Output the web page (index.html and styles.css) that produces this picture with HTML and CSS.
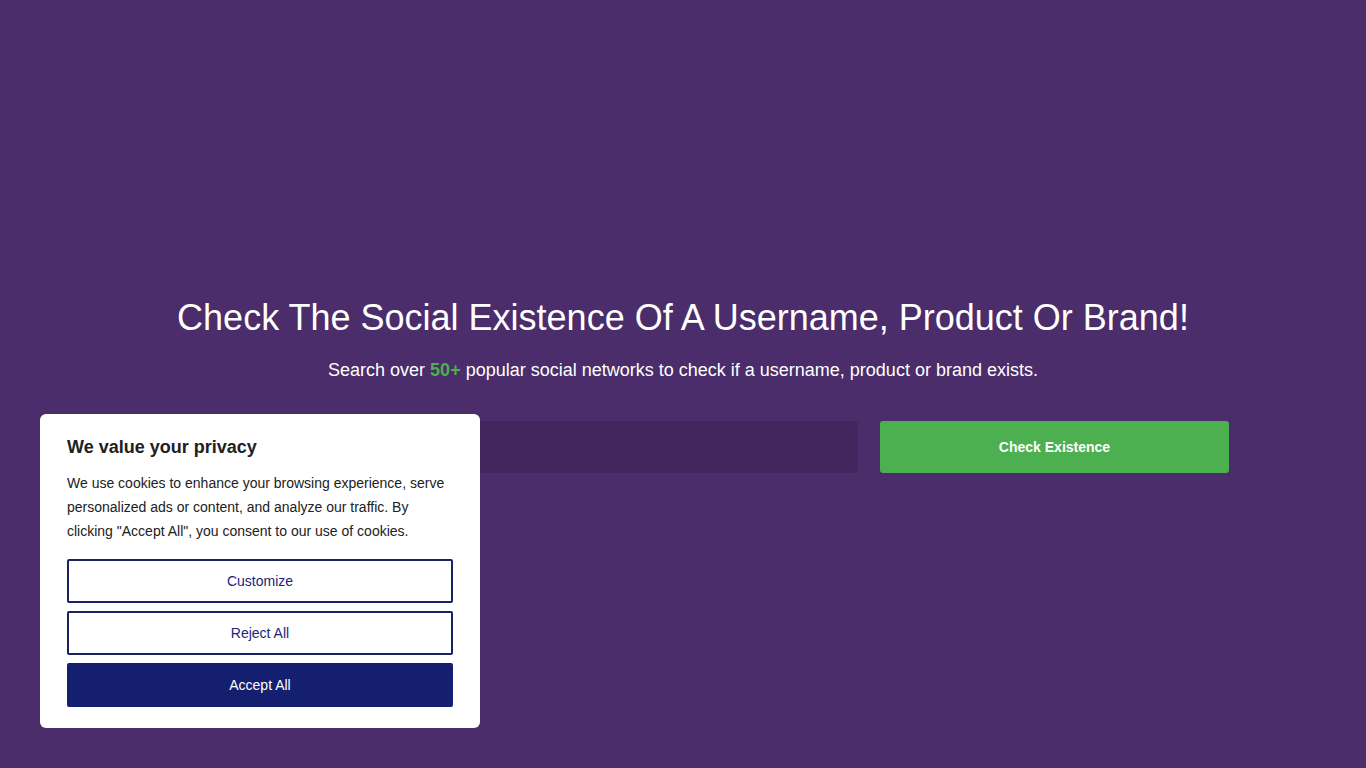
FILE: index.html
```html
<!DOCTYPE html>
<html lang="en">
<head>
  <meta charset="UTF-8">
  <title>Check Social Existence</title>
  <meta name="viewport" content="width=device-width, initial-scale=1.0">
  <link rel="stylesheet" href="styles.css">
</head>
<body>
  <!-- hero -->
  <section class="hero">
    <h1>Check The Social Existence Of A Username, Product Or Brand!</h1>
    <p class="lead">Search over <strong>50+</strong> popular social networks to check if a username, product or brand exists.</p>

    <form class="search-row">
      <input type="text" class="search-input" aria-label="Username">
      <button type="submit" class="check-button">Check Existence</button>
    </form>
  </section>

  <!-- cookie consent -->
  <div class="consent">
    <h3>We value your privacy</h3>
    <p>We use cookies to enhance your browsing experience, serve personalized ads or content, and analyze our traffic. By clicking "Accept All", you consent to our use of cookies.</p>
    <button class="consent-btn">Customize</button>
    <button class="consent-btn">Reject All</button>
    <button class="consent-btn accept">Accept All</button>
  </div>
</body>
</html>
```

FILE: styles.css
```css
* {
  margin: 0;
  padding: 0;
  box-sizing: border-box;
}

body {
  font-family: 'Liberation Sans', Arial, sans-serif;
  background: #4a2d6a;
  min-height: 100vh;
  overflow: hidden;
}

/* hero */
.hero {
  padding-top: 296px;
  text-align: center;
  color: #fff;
}

.hero h1 {
  font-size: 36px;
  font-weight: 400;
  line-height: 44px;
}

.lead {
  margin-top: 18px;
  font-size: 18px;
  line-height: 24px;
}

.lead strong {
  color: #4caf50;
}

.search-row {
  display: grid;
  grid-template-columns: 721px 349px;
  gap: 22px;
  justify-content: center;
  margin-top: 39px;
}

.search-input {
  height: 52px;
  background: #42275f;
  border: none;
  border-radius: 4px;
  padding: 0 16px;
  color: #fff;
  font-size: 16px;
}

.search-input:focus {
  outline: none;
}

.check-button {
  height: 52px;
  background: #4caf50;
  border: none;
  border-radius: 3px;
  color: #fff;
  font-family: inherit;
  font-size: 14px;
  font-weight: 700;
  cursor: pointer;
}

/* cookie consent */
.consent {
  position: fixed;
  left: 40px;
  bottom: 40px;
  width: 440px;
  background: #fff;
  border-radius: 6px;
  padding: 22px 27px 21px;
  color: #212121;
}

.consent h3 {
  font-size: 18px;
  font-weight: 700;
  line-height: 22px;
  margin-bottom: 13px;
}

.consent p {
  font-size: 14px;
  line-height: 24px;
  margin-bottom: 16px;
}

.consent-btn {
  display: block;
  width: 100%;
  height: 44px;
  margin-top: 8px;
  background: #fff;
  border: 2px solid #1b2263;
  border-radius: 2px;
  color: #1b2580;
  font-family: inherit;
  font-size: 14px;
  cursor: pointer;
}

.consent-btn:first-of-type {
  margin-top: 0;
}

.consent-btn.accept {
  background: #141f70;
  border-color: #141f70;
  color: #fff;
}
```
